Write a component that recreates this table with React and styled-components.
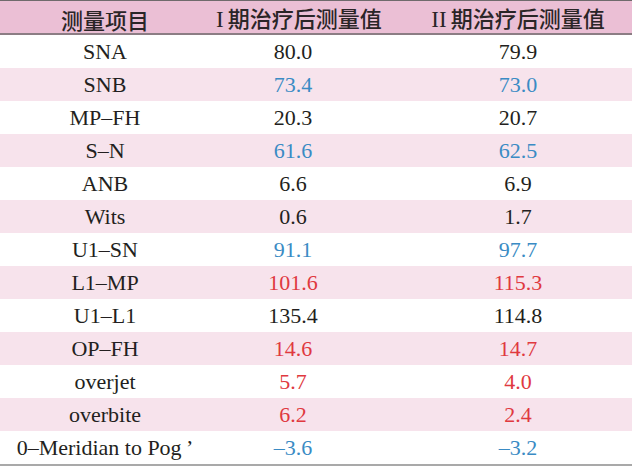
import React from "react";
import styled, { createGlobalStyle } from "styled-components";

const Global = createGlobalStyle`
  html, body { margin: 0; padding: 0; background: #ffffff; }
`;

const serif = `"Liberation Serif", "Times New Roman", Tinos, "DejaVu Serif", serif`;

const Table = styled.div`
  width: 632px;
  border-top: 1px solid #6f6a6c;
  border-bottom: 2px solid #a9a9a9;
`;

const HeaderRow = styled.div`
  display: grid;
  grid-template-columns: 210px 166px 1fr;
  height: 32px;
  background: #ebbfd5;
  border-bottom: 2px solid #8c7d84;
  align-items: center;
`;

const HeadCell = styled.div`
  text-align: center;
  font-family: "Noto Sans CJK SC", "Noto Sans", sans-serif;
  font-weight: 500;
  font-size: 22px;
  line-height: 32px;
  color: #2a2527;
  padding-left: ${(p) => p.$pl || 0}px;
  white-space: nowrap;
`;

const Roman = styled.span`
  font-family: ${serif};
  font-weight: 400;
  font-size: 23px;
  margin-right: 4px;
`;

const Row = styled.div`
  display: grid;
  grid-template-columns: 210px 166px 1fr;
  height: 33px;
  align-items: center;
  background: ${(p) => (p.$alt ? "#f7e3ec" : "#ffffff")};
`;

const Cell = styled.div`
  text-align: center;
  font-family: ${serif};
  font-size: 22px;
  line-height: 33px;
  color: ${(p) => (p.$c === "b" ? "#3a8bc4" : p.$c === "r" ? "#e0393f" : "#231f20")};
  padding-left: ${(p) => p.$pl || 0}px;
  white-space: nowrap;
`;

const rows = [
  ["SNA", "80.0", "79.9", "k"],
  ["SNB", "73.4", "73.0", "b"],
  ["MP–FH", "20.3", "20.7", "k"],
  ["S–N", "61.6", "62.5", "b"],
  ["ANB", "6.6", "6.9", "k"],
  ["Wits", "0.6", "1.7", "k"],
  ["U1–SN", "91.1", "97.7", "b"],
  ["L1–MP", "101.6", "115.3", "r"],
  ["U1–L1", "135.4", "114.8", "k"],
  ["OP–FH", "14.6", "14.7", "r"],
  ["overjet", "5.7", "4.0", "r"],
  ["overbite", "6.2", "2.4", "r"],
  ["0–Meridian to Pog\u2009’", "–3.6", "–3.2", "b"],
];

export default function App() {
  return (
    <>
      <Global />
      <Table>
        <HeaderRow>
          <HeadCell>测量项目</HeadCell>
          <HeadCell $pl={6}>
            <Roman>I</Roman>期治疗后测量值
          </HeadCell>
          <HeadCell $pl={28}>
            <Roman>II</Roman>期治疗后测量值
          </HeadCell>
        </HeaderRow>
        {rows.map((r, i) => (
          <Row key={r[0]} $alt={i % 2 === 1}>
            <Cell>{r[0]}</Cell>
            <Cell $c={r[3]}>{r[1]}</Cell>
            <Cell $c={r[3]} $pl={28}>{r[2]}</Cell>
          </Row>
        ))}
      </Table>
    </>
  );
}
